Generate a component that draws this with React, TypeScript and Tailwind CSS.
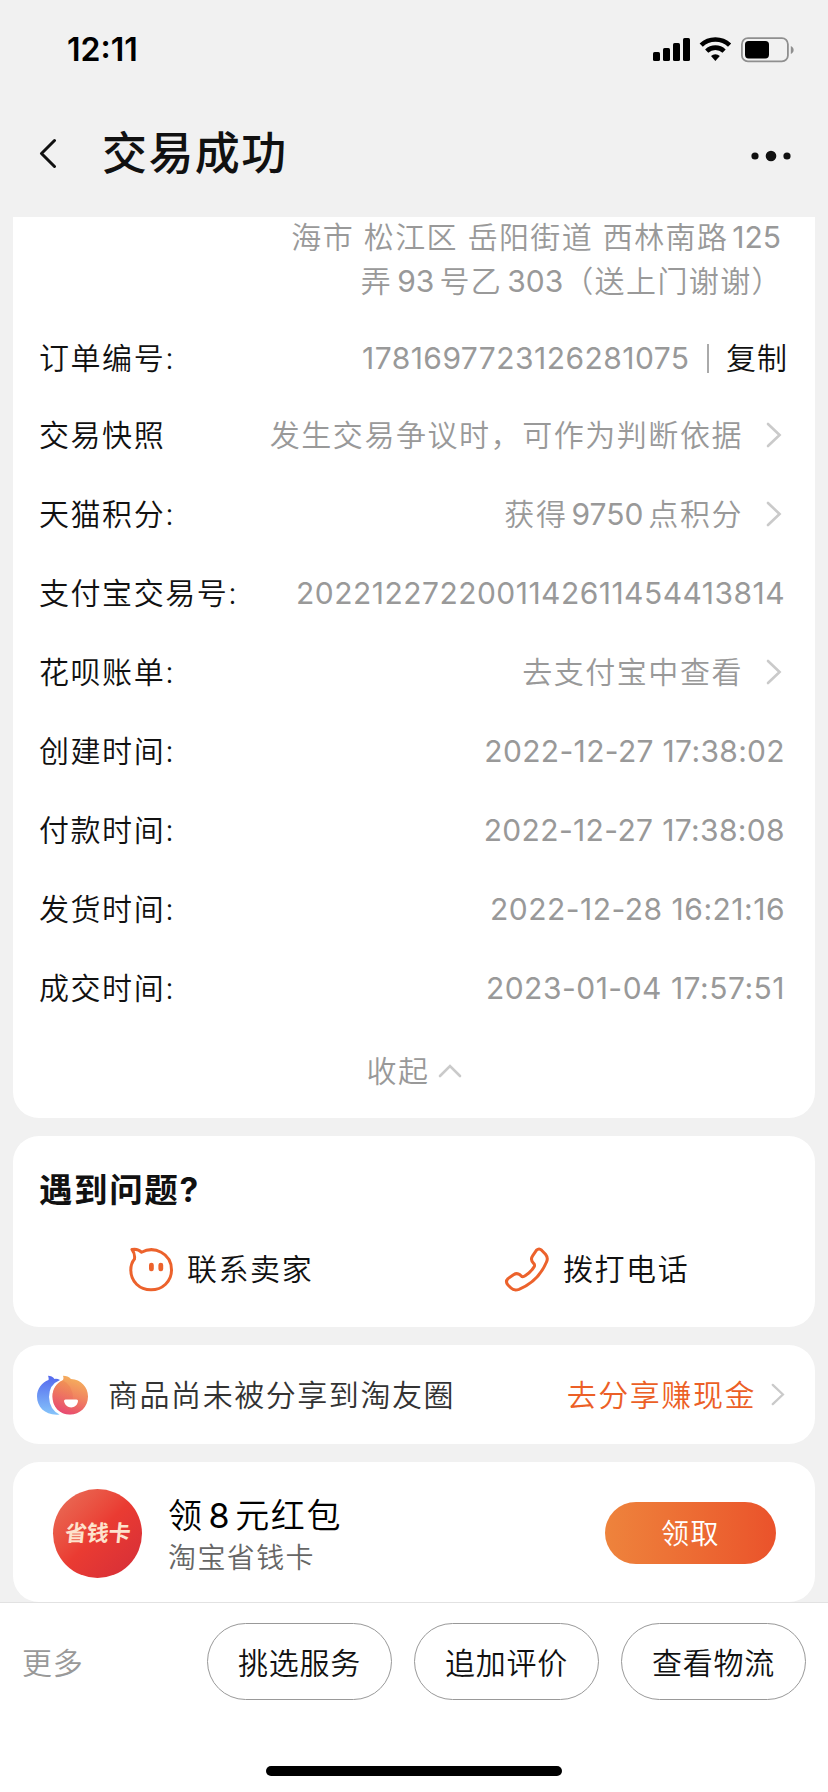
import React from "react";
import { clsx } from "clsx";

interface DetailRow {
  label: string;
  value: React.ReactNode;
  arrow?: boolean;
  valueClass?: string;
}

const rows: DetailRow[] = [
  { label: "交易快照", value: "发生交易争议时，可作为判断依据", arrow: true },
  {
    label: "天猫积分:",
    value: (
      <>
        获得<span className="ml-1 mr-[5px] font-normal tracking-normal">9750</span>点积分
      </>
    ),
    arrow: true,
  },
  { label: "支付宝交易号:", value: "2022122722001142611454413814", valueClass: "font-normal tracking-[0.47px]" },
  { label: "花呗账单:", value: "去支付宝中查看", arrow: true },
  { label: "创建时间:", value: "2022-12-27 17:38:02", valueClass: "font-normal tracking-[0.33px]" },
  { label: "付款时间:", value: "2022-12-27 17:38:08", valueClass: "font-normal tracking-[0.35px]" },
  { label: "发货时间:", value: "2022-12-28 16:21:16", valueClass: "font-normal tracking-[0.5px]" },
  { label: "成交时间:", value: "2023-01-04 17:57:51", valueClass: "font-normal tracking-[0.5px]" },
];

const actions = ["挑选服务", "追加评价", "查看物流"];

function Chevron({ className }: { className?: string }) {
  return (
    <svg viewBox="0 0 16 26" className={clsx("shrink-0", className)} fill="none" stroke="#cacaca" strokeWidth="2.6" strokeLinecap="round">
      <path d="M2 2 L13.6 13 L2 24" />
    </svg>
  );
}

function StatusBar() {
  return (
    <div className="flex h-[100px] items-center justify-between pl-[67px] pr-[34px]">
      <span className="text-[32px] font-semibold leading-none tracking-normal text-black">12:11</span>
      <svg width="142" height="26" viewBox="0 0 142 26">
        <rect x="1" y="15" width="7" height="9" rx="1.6" />
        <rect x="11" y="11" width="7" height="13" rx="1.6" />
        <rect x="21" y="6" width="7" height="18" rx="1.6" />
        <rect x="31" y="1" width="7" height="23" rx="1.6" />
        <g fill="none" stroke="#000" strokeWidth="4.6">
          <path d="M49.2 8.2 A20.5 20.5 0 0 1 77.6 8.2" />
          <path d="M54.7 14.1 A12.6 12.6 0 0 1 72.1 14.1" />
        </g>
        <path d="M59 18.9 A6.4 6.4 0 0 1 67.8 18.9 L63.4 24 Z" />
        <rect x="89.9" y="1.2" width="46" height="23.2" rx="6" fill="none" stroke="#8f8f8f" strokeWidth="1.8" />
        <rect x="93" y="4" width="24" height="17.4" rx="3.6" />
        <path d="M138.8 9 C142.6 10.4 142.6 15.6 138.8 17 Z" fill="#8f8f8f" />
      </svg>
    </div>
  );
}

function NavBar() {
  return (
    <div className="flex h-[117px] items-start pl-[38px] pr-[36px] pt-[25px]">
      <svg width="20" height="30" viewBox="0 0 20 30" className="mt-[13px]" fill="none" stroke="#111" strokeWidth="3" strokeLinecap="round" strokeLinejoin="round">
        <path d="M16.5 2.5 L3.5 15.5 L16.5 28.5" />
      </svg>
      <h1 className="ml-[44px] mt-[2px] text-[45px] font-medium leading-[54px] tracking-[1.4px] text-[#111]">交易成功</h1>
      <svg width="42" height="14" viewBox="0 0 42 14" className="ml-auto mt-6" fill="#111">
        <circle cx="5" cy="7" r="3.6" />
        <circle cx="21" cy="7" r="5.3" />
        <circle cx="37" cy="7" r="3.6" />
      </svg>
    </div>
  );
}

function OrderDetails() {
  return (
    <section className="h-[901px] overflow-hidden rounded-b-[26px] bg-white">
      <div className="-mt-[2px] h-[104px] pr-[34px] text-right leading-[44px] text-[#999]">
        <p className="tracking-[1.35px]">
          海市 松江区 岳阳街道 西林南路<span className="ml-1 font-normal tracking-normal">125</span>
        </p>
        <p className="-mr-[2px] tracking-[1.4px]">
          弄<span className="mx-[5px] font-normal tracking-normal">93</span>号乙<span className="ml-[5px] font-normal tracking-normal">303</span>（送上门谢谢）
        </p>
      </div>
      <div className="flex h-[77px] items-center justify-between pl-[26px] pr-[27px]">
        <span className="mt-[2px] text-[#111]">订单编号:</span>
        <div className="mt-[2px] flex items-center text-[#999]">
          <span className="font-normal tracking-[0.45px]">1781697723126281075</span>
          <span className="ml-[17px] mr-[17px] h-[29px] w-[2.5px] bg-[#aaa]" />
          <span className="tracking-[1px] text-[#111]">复制</span>
        </div>
      </div>
      {rows.map((row) => (
        <div key={row.label} className="flex h-[79px] items-center justify-between pl-[26px] pr-[30px]">
          <span className="text-[#111]">{row.label}</span>
          <div className="flex items-center text-[#999]">
            <span className={row.valueClass}>{row.value}</span>
            {row.arrow && <Chevron className="mb-px ml-[23px] mr-[3px] h-[26px] w-[16px]" />}
          </div>
        </div>
      ))}
      <div className="flex h-[87px] items-center justify-center text-[#999]">
        收起
        <svg width="24" height="14" viewBox="0 0 24 14" className="mb-[2px] ml-[8px]" fill="none" stroke="#cacaca" strokeWidth="2.6" strokeLinecap="round">
          <path d="M2 12 L12 2 L22 12" />
        </svg>
      </div>
    </section>
  );
}

function HelpCard() {
  return (
    <section className="h-[191px] rounded-[26px] bg-white pt-[30px]">
      <h2 className="pl-[26px] text-[33.5px] font-bold leading-[48px] tracking-[1.6px] text-[#111]">遇到问题?</h2>
      <div className="mt-[23px] flex h-16 text-[#111]">
        <div className="flex w-[374px] items-center pl-[115px]">
          <svg width="46" height="46" viewBox="0 0 46 46" fill="none" stroke="#ec622c" strokeWidth="3" strokeLinejoin="round">
            <path d="M4 3.5 C7 3 11 3.5 13.5 6.3 C26 -0.5 43.5 7 43.5 24 C43.5 35.5 34.5 43.8 23 43.8 C11.5 43.8 2.8 35.5 2.8 24 C2.8 19.5 4 16 6.5 13 C7 9 6 6 4 3.5 Z" />
            <g fill="#ec622c" stroke="none">
              <rect x="21" y="16.7" width="4.8" height="8.6" rx="2.4" />
              <rect x="30.4" y="16.7" width="4.8" height="8.6" rx="2.4" />
            </g>
          </svg>
          <span className="ml-[13px]">联系卖家</span>
        </div>
        <div className="flex items-center pl-[117px]">
          <svg width="46" height="46" viewBox="0 0 46 46" fill="none" stroke="#ec622c" strokeWidth="3" strokeLinejoin="round">
            <path d="M32.5 4.2 Q35 1.8 37.6 4.2 L41.5 8.2 Q44.5 12 42.5 16 C37 29 28 38 15 43.3 Q10 45 7 42 L4 39 Q1 35.5 4 32.6 L9.5 28.7 Q13 26.5 16 28.8 L18 30.6 Q19.5 31 21.5 29.5 Q27.5 25.5 30.3 20.5 Q31 19 29.8 17.6 Q25.8 13.8 28.6 9.8 Z" />
          </svg>
          <span className="ml-[13px]">拨打电话</span>
        </div>
      </div>
    </section>
  );
}

function ShareCard() {
  return (
    <section className="flex h-[99px] items-center rounded-[26px] bg-white pl-[24px] pr-[30px]">
      <svg width="52" height="40" viewBox="0 0 52 40">
        <defs>
          <linearGradient id="blue" x1="0" y1="0" x2="0" y2="1">
            <stop offset="0" stopColor="#5468ee" />
            <stop offset="1" stopColor="#85c4fa" />
          </linearGradient>
          <linearGradient id="warm" x1="0.7" y1="0" x2="0.4" y2="1">
            <stop offset="0" stopColor="#f5b55c" />
            <stop offset="0.5" stopColor="#f18560" />
            <stop offset="1" stopColor="#e84a6c" />
          </linearGradient>
          <linearGradient id="pink" x1="0.6" y1="0" x2="0.3" y2="1">
            <stop offset="0" stopColor="#ef8b4e" />
            <stop offset="1" stopColor="#e8467a" />
          </linearGradient>
        </defs>
        <path d="M11 0.8 Q15 0.8 17.5 4 Q20 3.4 23 5 Q12 9.5 12 22 Q12.5 34.5 22.5 39.5 C9 41 0 32.5 0 21.5 C0 13.5 5 7.5 11.5 5 Q12 3 11 0.8 Z" fill="url(#blue)" />
        <path d="M26 0.8 Q31 0.8 34 4 C44 4.5 51 12 51 21.5 C51 32 43 39.5 33 39.5 C22.5 39.5 15.5 32 15.5 21.5 C15.5 14 19.5 8 26 5 Q27 3 26 0.8 Z" fill="url(#warm)" />
        <path d="M26 5.5 Q36 10 36 24 L27 24.5 Q27 34 38 38.6 C26 42 15.5 33 15.5 21.5 C15.5 14 19.5 8 26 5.5 Z" fill="url(#pink)" opacity="0.6" />
        <path d="M28.5 24.5 H39.5 Q41.2 24.5 41 26 C40 34.5 28.5 34.5 27 26 Q27 24.5 28.5 24.5 Z" fill="#fff" />
      </svg>
      <span className="ml-[19px] mt-[2px] text-[#333]">商品尚未被分享到淘友圈</span>
      <span className="ml-auto mt-[2px] text-[#ec5f26]">去分享赚现金</span>
      <Chevron className="mb-px ml-[15px] h-[23px] w-[14px]" />
    </section>
  );
}

function CouponCard() {
  return (
    <section className="flex h-[140px] items-center rounded-[26px] bg-white pl-[40px] pr-[39px]">
      <div className="mt-[2px] flex size-[89px] items-center justify-center rounded-full bg-linear-to-br from-[#e8705a] via-[#ea3b32] to-[#d42d38]">
        <span className="-skew-x-6 text-[22px] font-bold leading-none tracking-[-0.2px] text-[#fde3cd]">省钱卡</span>
      </div>
      <div className="ml-[26px] mt-[8px]">
        <p className="text-[34px] leading-[44px] tracking-[1.6px] text-black">
          领<span className="ml-[5px] mr-[4px] font-normal">8</span>元红包
        </p>
        <p className="text-[28px] leading-[40px] tracking-[1.4px] text-[#666]">淘宝省钱卡</p>
      </div>
      <button className="ml-auto mt-[2px] h-[62px] w-[171px] rounded-full bg-linear-to-r from-[#ee833c] to-[#ea522b] pt-[2px] text-[28px] tracking-[1.5px] text-white">领取</button>
    </section>
  );
}

function BottomBar() {
  return (
    <footer className="flex h-[190px] flex-col border-t border-[#e2e2e2] bg-white">
      <div className="mt-[20px] flex h-[77px] items-center gap-[22px] pl-[22px] pr-[22px]">
        <span className="mr-auto mt-[3px] tracking-[0.8px] text-[#999]">更多</span>
        {actions.map((action) => (
          <button key={action} className="h-[77px] w-[185px] rounded-full border border-[#999] pt-[3px] tracking-[0.8px] text-[#111]">
            {action}
          </button>
        ))}
      </div>
      <div className="mx-auto mb-[16px] mt-auto h-[10px] w-[296px] rounded-full bg-black" />
    </footer>
  );
}

export default function App() {
  return (
    <div className="flex h-[1792px] w-[828px] flex-col overflow-hidden bg-[#f1f1f1] font-['Inter','Noto_Sans_CJK_SC',sans-serif] text-[30px] font-[350] tracking-[1.55px]">
      <StatusBar />
      <NavBar />
      <main className="flex flex-1 flex-col gap-[18px] px-[13px]">
        <OrderDetails />
        <HelpCard />
        <ShareCard />
        <CouponCard />
      </main>
      <BottomBar />
    </div>
  );
}
